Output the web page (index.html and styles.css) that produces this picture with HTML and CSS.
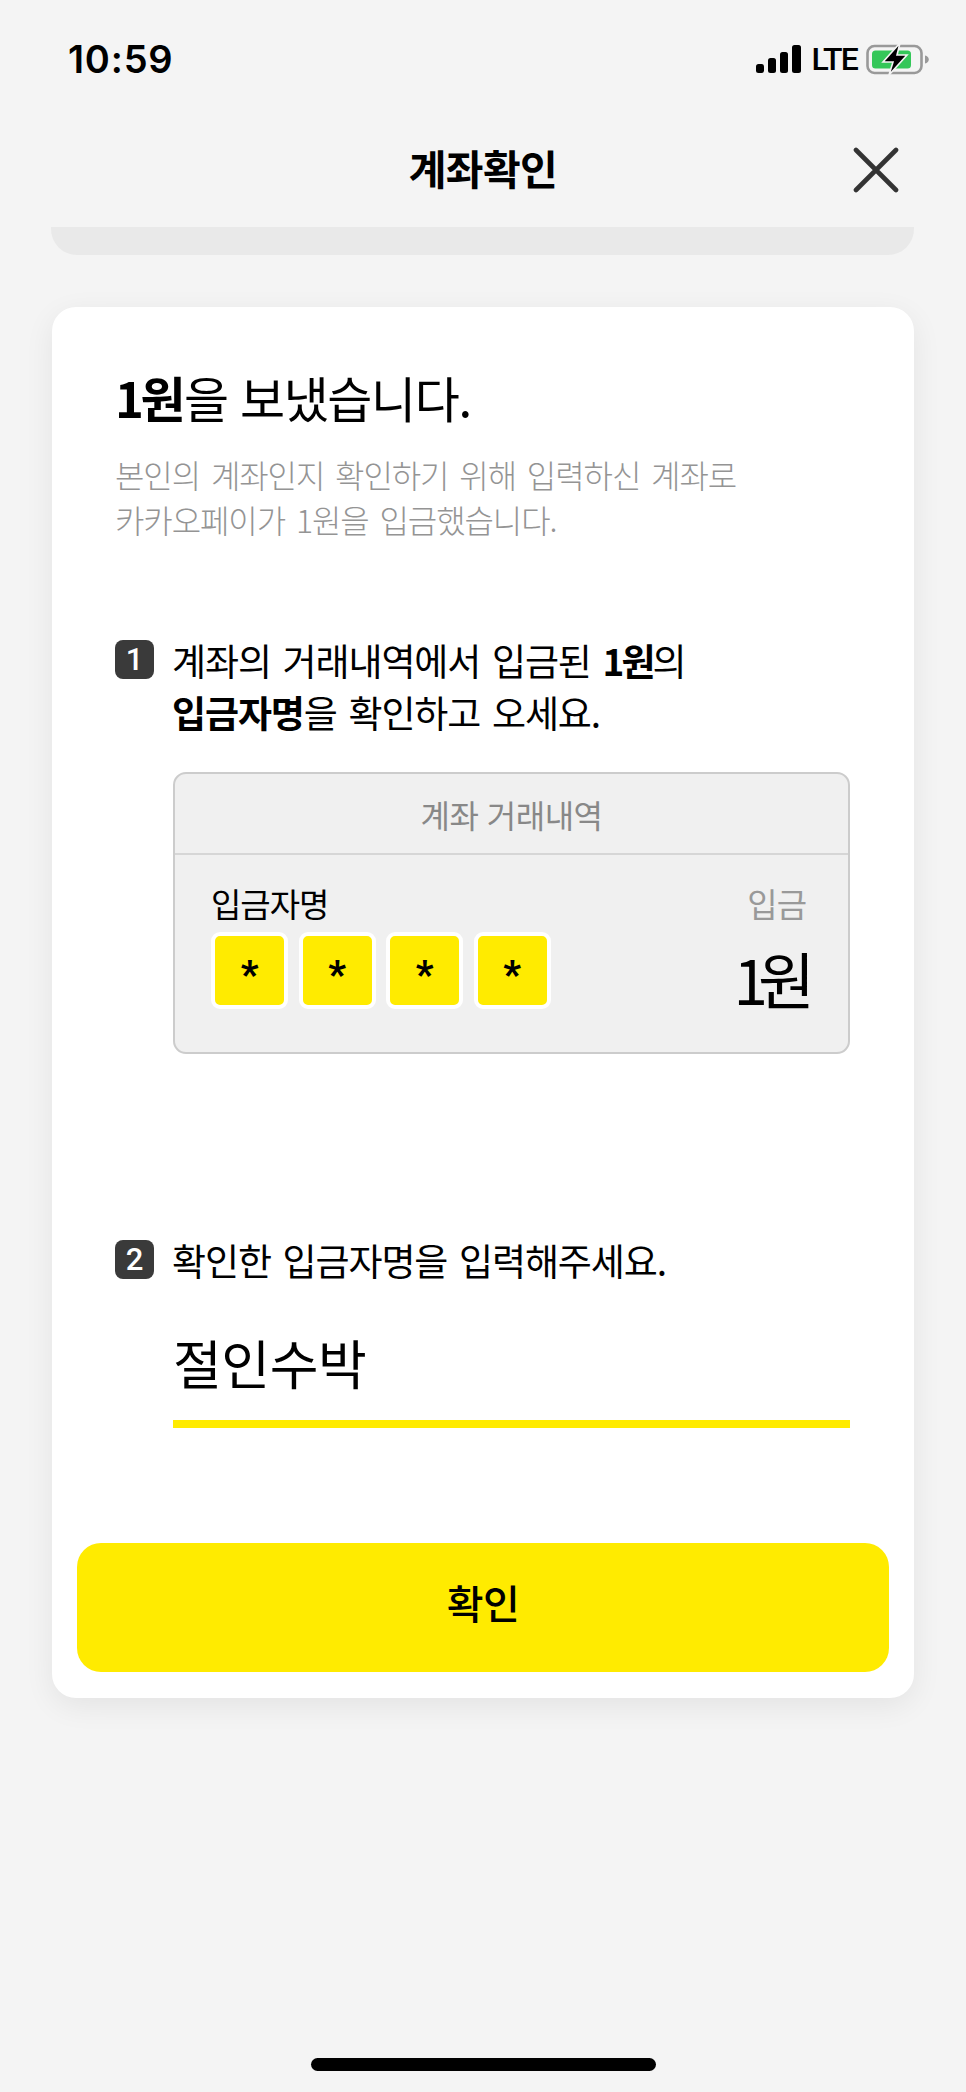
FILE: index.html
```html
<!DOCTYPE html>
<html lang="ko">
<head>
<meta charset="utf-8">
<title>계좌확인</title>
<link rel="stylesheet" href="styles.css">
</head>
<body>
<div class="screen">
  <div class="status">
    <span class="time">10:59</span>
    <div class="status-right">
      <svg class="signal" viewBox="0 0 45 28" width="45" height="28"><rect x="0" y="19" width="8" height="9" rx="2.5"/><rect x="12" y="13" width="8" height="15" rx="2.5"/><rect x="24" y="7" width="8" height="21" rx="2.5"/><rect x="36" y="0" width="9" height="28" rx="2.5"/></svg>
      <span class="lte">LTE</span>
      <svg class="battery" viewBox="0 0 63 32" width="63" height="32"><rect x="1.5" y="3" width="54" height="27" rx="7" fill="none" stroke="#999" stroke-width="2.6"/><path d="M59 12.5c2.5.6 3.8 2.1 3.8 4s-1.300 3.400-3.800 4z" fill="#999"/><rect x="6" y="7.500" width="39" height="18" rx="3.500" fill="#34c759"/><path d="M34 0 17 19h10l-4 13 18-20H31z" fill="#000" stroke="#f4f4f4" stroke-width="1.600"/></svg>
    </div>
  </div>
  <header class="nav">
    <h1 class="nav-title">계좌확인</h1>
    <svg class="close" viewBox="0 0 46 46" width="46" height="46"><path d="M3 3l40 40M43 3L3 43" fill="none" stroke="#333" stroke-width="4.600" stroke-linecap="round"/></svg>
  </header>
  <div class="peek"></div>
  <main class="card">
    <h2 class="heading"><b>1원</b>을 보냈습니다.</h2>
    <p class="sub">본인의 계좌인지 확인하기 위해 입력하신 계좌로<br>카카오페이가 1원을 입금했습니다.</p>
    <section class="step step-one">
      <span class="badge">1</span>
      <p class="step-text">계좌의 거래내역에서 입금된 <b class="amount">1원</b>의<br><b>입금자명</b>을 확인하고 오세요.</p>
    </section>
    <div class="ledger">
      <div class="ledger-head">계좌 거래내역</div>
      <div class="ledger-body">
        <div class="ledger-name">
          <span class="ledger-label">입금자명</span>
          <div class="masks">
            <span class="mask">*</span><span class="mask">*</span><span class="mask">*</span><span class="mask">*</span>
          </div>
        </div>
        <div class="ledger-amount">
          <span class="ledger-in">입금</span>
          <span class="ledger-won">1원</span>
        </div>
      </div>
    </div>
    <section class="step step-two">
      <span class="badge">2</span>
      <p class="step-text">확인한 입금자명을 입력해주세요.</p>
    </section>
    <div class="field">절인수박</div>
    <button class="confirm" type="button">확인</button>
  </main>
  <div class="home"></div>
</div>
</body>
</html>
```
FILE: styles.css
```css
* { box-sizing: border-box; }
html, body { margin: 0; padding: 0; }
body {
  width: 966px;
  height: 2092px;
  overflow: hidden;
  background: #f4f4f4;
  color: #000;
  font-family: "Noto Sans CJK KR", "Liberation Sans", sans-serif;
}
.screen { display: flex; flex-direction: column; height: 2092px; }
.status {
  display: flex;
  justify-content: space-between;
  align-items: center;
  flex: none;
  height: 42px;
  margin-top: 38px;
  padding: 0 37px 0 68px;
}
.time { font: 600 38px/42px Inter, "Liberation Sans", sans-serif; letter-spacing: 0.8px; }
.status-right { display: flex; align-items: center; }
.signal { display: block; }
.lte { margin: 0 9px 0 10px; font: 500 32px/32px Roboto, sans-serif; letter-spacing: -1.8px; }
.battery { display: block; }
.nav {
  position: relative;
  display: flex;
  flex: none;
  justify-content: center;
  align-items: center;
  height: 66px;
  margin-top: 57px;
}
.nav-title { margin: 0 0 5px; font-size: 41px; line-height: 61px; font-weight: 700; letter-spacing: -0.6px; }
.close { position: absolute; right: 67px; top: 10px; }
.peek {
  flex: none;
  width: 863px;
  height: 28px;
  margin: 24px 0 0 51px;
  background: #e9e9e9;
  border-radius: 0 0 26px 26px;
}
.card {
  display: flex;
  flex: none;
  flex-direction: column;
  width: 862px;
  height: 1391px;
  margin: 52px 0 0 52px;
  padding: 60px 25px 26px;
  background: #fff;
  border-radius: 24px;
  box-shadow: 0 8px 30px rgba(0, 0, 0, 0.07);
}
.card > * { flex: none; }
.heading {
  margin: 0 0 0 38px;
  font-size: 49px;
  line-height: 60px;
  font-weight: 400;
  letter-spacing: -1.4px;
}
.heading b { font-weight: 700; letter-spacing: -3.5px; margin-right: 2px; }
.sub {
  margin: 25px 0 0 38px;
  font-size: 32px;
  line-height: 45px;
  font-weight: 300;
  color: #949494;
  letter-spacing: -1.1px;
  word-spacing: 3px;
}
.step { display: flex; margin-left: 38px; gap: 18px; }
.step-one { margin-top: 92px; }
.step-two { margin-top: 180px; }
.badge {
  flex: none;
  display: flex;
  justify-content: center;
  align-items: center;
  width: 39px;
  height: 39px;
  margin-top: 6px;
  border-radius: 8px;
  background: #3a3a3a;
  color: #fff;
  font: 500 31px/39px Roboto, sans-serif;
}
.step-text {
  margin: 0;
  font-size: 37px;
  line-height: 52px;
  letter-spacing: -1.1px;
  word-spacing: 2.5px;
}
.step-text b { font-weight: 700; }
.step-text .amount { letter-spacing: -3px; }
.ledger {
  width: 677px;
  height: 282px;
  margin: 34px 0 0 96px;
  border: 2px solid #ccc;
  border-radius: 13px;
  background: #f0f0f0;
}
.ledger-head {
  height: 81px;
  border-bottom: 2px solid #d6d6d6;
  text-align: center;
  font-size: 32px;
  line-height: 80px;
  color: #888;
  letter-spacing: -0.5px;
}
.ledger-body {
  display: flex;
  justify-content: space-between;
  padding: 26px 42px 0 36px;
}
.ledger-label { display: block; font-size: 33px; line-height: 44px; letter-spacing: -1px; }
.masks { display: flex; gap: 10.5px; margin-top: 7px; }
.mask {
  display: flex;
  justify-content: center;
  align-items: center;
  width: 77px;
  height: 77px;
  padding-top: 8px;
  border: 4px solid #fff;
  border-radius: 9px;
  background: #ffeb00;
  font: 900 38px/1 Roboto, sans-serif;
}
.ledger-amount { display: flex; flex-direction: column; align-items: flex-end; }
.ledger-in { font-size: 33px; line-height: 44px; color: #999; letter-spacing: -1px; }
.ledger-won { margin: 22px 1px 0 0; font-size: 62px; line-height: 62px; font-weight: 400; letter-spacing: -10px; }
.field {
  width: 677px;
  height: 104px;
  margin: 38px 0 0 96px;
  border-bottom: 8px solid #ffeb00;
  font-size: 53px;
  line-height: 76px;
  letter-spacing: -0.4px;
}
.confirm {
  display: block;
  width: 812px;
  height: 129px;
  margin: 115px 0 0;
  padding: 0 0 12px;
  border: 0;
  border-radius: 24px;
  background: #ffeb00;
  color: #000;
  font: 500 40px/1 "Noto Sans CJK KR", sans-serif;
  letter-spacing: -0.6px;
}
.home {
  flex: none;
  width: 345px;
  height: 13px;
  margin: 360px 0 0 311px;
  border-radius: 7px;
  background: #000;
}
```
